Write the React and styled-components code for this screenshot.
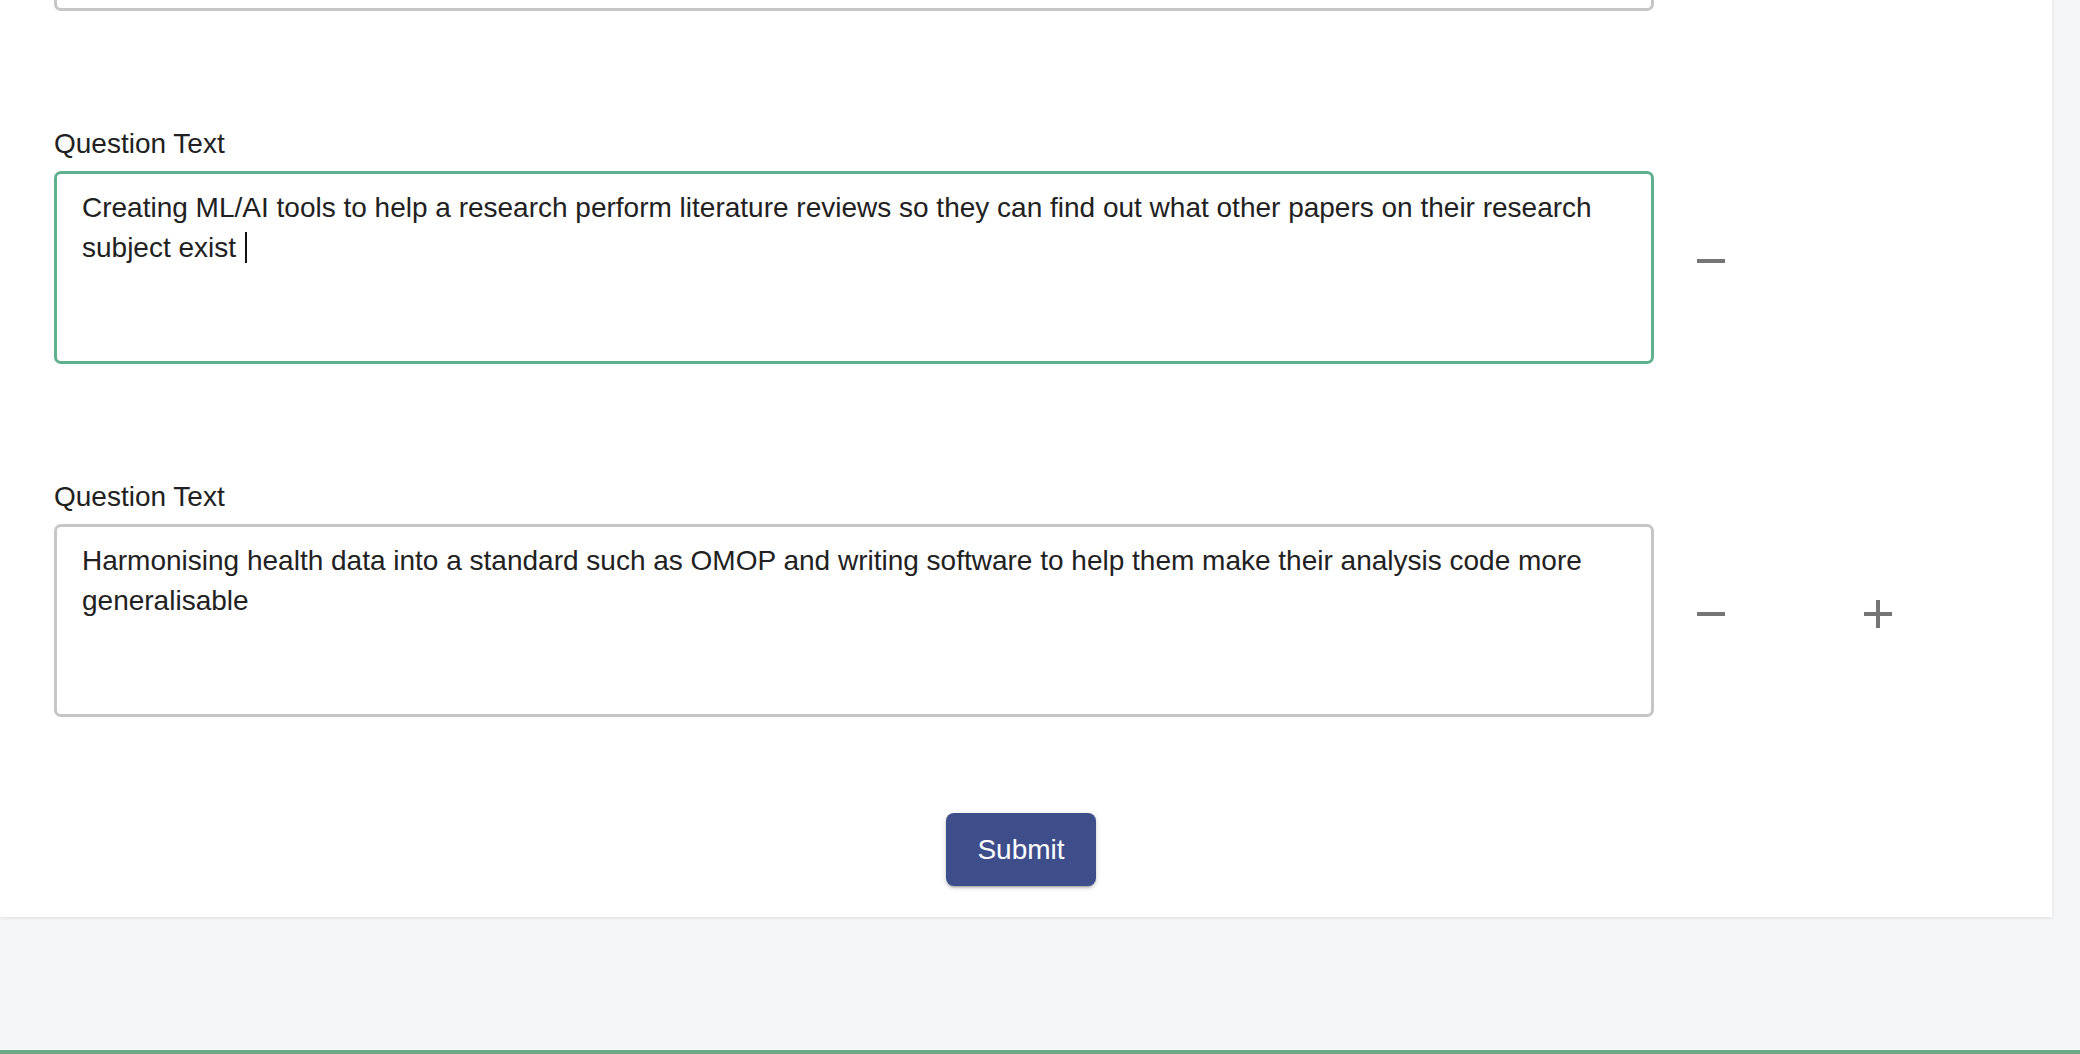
import React from 'react'
import styled, { createGlobalStyle } from 'styled-components'

const GlobalStyle = createGlobalStyle`
  html, body {
    margin: 0;
    padding: 0;
    height: 100%;
    overflow: hidden;
    background: #f5f6f8;
    font-family: "Liberation Sans", Arial, sans-serif;
  }
`

// the first question sits above the scrolled viewport, only its box edge shows
const questions = [
  { text: '', focused: false, last: false, hidden: true },
  {
    text: 'Creating ML/AI tools to help a research perform literature reviews so they can find out what other papers on their research subject exist\u00a0',
    focused: true,
    last: false,
  },
  {
    text: 'Harmonising health data into a standard such as OMOP and writing software to help them make their analysis code more generalisable',
    focused: false,
    last: true,
  },
]

const MinusIcon = () => (
  <svg width="48" height="48" viewBox="0 0 24 24" fill="currentColor">
    <path d="M19 13H5v-2h14v2z" />
  </svg>
)

const PlusIcon = () => (
  <svg width="48" height="48" viewBox="0 0 24 24" fill="currentColor">
    <path d="M19 13h-6v6h-2v-6H5v-2h6V5h2v6h6v2z" />
  </svg>
)

const App = () => {
  return (
    <Page>
      <GlobalStyle />
      <Card>
        <Form>
          {questions.map((q, i) => (
            <Block key={i}>
              {!q.hidden && <Label>Question Text</Label>}
              <Row>
                <TextBox focused={q.focused}>
                  {q.text}
                  {q.focused && <Caret />}
                </TextBox>
                <Actions>
                  <IconButton aria-label="remove question">
                    <MinusIcon />
                  </IconButton>
                  {q.last && (
                    <IconButton aria-label="add question">
                      <PlusIcon />
                    </IconButton>
                  )}
                </Actions>
              </Row>
            </Block>
          ))}
        </Form>
        <ButtonBar>
          <SubmitButton>Submit</SubmitButton>
        </ButtonBar>
      </Card>
      <Footer />
    </Page>
  )
}

export default App

const Page = styled.div`
  display: flex;
  flex-direction: column;
  min-height: 100vh;
`

const Card = styled.div`
  margin-top: -182px;
  margin-right: 28px;
  background: #fff;
  box-shadow: 0 1px 4px rgba(0, 0, 0, 0.1);
  padding: 0 0 31px 54px;
  display: flex;
  flex-direction: column;
`

const Form = styled.div`
  display: flex;
  flex-direction: column;
  gap: 117px;
`

const Block = styled.div`
  display: flex;
  flex-direction: column;
`

const Label = styled.div`
  font-size: 28px;
  line-height: 32px;
  color: #212121;
  margin-bottom: 11px;
`

const Row = styled.div`
  display: flex;
  align-items: center;
`

const TextBox = styled.div`
  box-sizing: border-box;
  width: 1600px;
  height: 193px;
  flex-shrink: 0;
  border: 3px solid ${(p) => (p.focused ? '#5fb08e' : '#c6c6c6')};
  border-radius: 7px;
  padding: 14px 25px;
  font-size: 28px;
  line-height: 40px;
  color: #212121;
  white-space: pre-wrap;
  overflow: hidden;
`

const Caret = styled.span`
  display: inline-block;
  width: 2px;
  height: 31px;
  margin-left: 1px;
  background: #111;
  vertical-align: -6px;
`

const Actions = styled.div`
  display: flex;
  align-items: center;
  gap: 119px;
  margin-left: 33px;
  margin-bottom: 13px;
`

const IconButton = styled.button`
  display: flex;
  align-items: center;
  justify-content: center;
  width: 48px;
  height: 48px;
  padding: 0;
  border: none;
  background: transparent;
  color: #757575;
  cursor: pointer;
`

const ButtonBar = styled.div`
  display: flex;
  justify-content: center;
  margin-top: 96px;
  padding-right: 64px;
`

const SubmitButton = styled.button`
  width: 150px;
  height: 73px;
  border: none;
  border-radius: 8px;
  background: #3d4e8b;
  color: #fff;
  font-family: "Liberation Sans", Arial, sans-serif;
  font-size: 28px;
  box-shadow: 0 3px 2px -2px rgba(0, 0, 0, 0.2), 0 2px 3px rgba(0, 0, 0, 0.14),
    0 1px 7px rgba(0, 0, 0, 0.12);
  cursor: pointer;
`

const Footer = styled.div`
  margin-top: 133px;
  height: 60px;
  border-top: 4px solid #6aaa88;
  background: #f5f6f8;
`
